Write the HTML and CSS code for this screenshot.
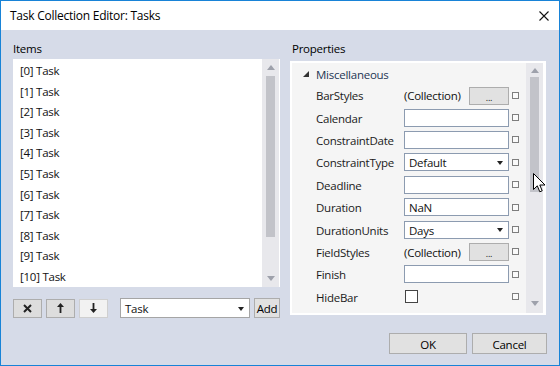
FILE: index.html
```html
<!DOCTYPE html>
<html lang="en">
<head>
  <meta charset="UTF-8" />
  <title>Task Collection Editor: Tasks</title>
  <link rel="stylesheet" href="styles.css">
</head>
<body>

  <div class="window">
    <div class="titlebar">
      <span class="title">Task Collection Editor: Tasks</span>
      <svg class="close" width="10" height="10" viewBox="0 0 10 10">
        <path d="M0.5 0.5 L9.5 9.5 M9.5 0.5 L0.5 9.5" stroke="#111" stroke-width="1.1" fill="none"/>
      </svg>
    </div>

    <div class="content">
      <div class="columns">

        <div class="col">
          <div class="caption">Items</div>
          <div class="listbox">
            <ul class="items">
              <li>[0] Task</li>
              <li>[1] Task</li>
              <li>[2] Task</li>
              <li>[3] Task</li>
              <li>[4] Task</li>
              <li>[5] Task</li>
              <li>[6] Task</li>
              <li>[7] Task</li>
              <li>[8] Task</li>
              <li>[9] Task</li>
              <li>[10] Task</li>
            </ul>
            <div class="vscroll list-scroll">
              <span class="arrow up"></span>
              <span class="thumb"></span>
              <span class="arrow down"></span>
            </div>
          </div>

          <div class="item-tools">
            <button class="tool">
              <svg width="9" height="9" viewBox="0 0 9 9"><path d="M1 1 L8 8 M8 1 L1 8" stroke="#222" stroke-width="2" fill="none"/></svg>
            </button>
            <button class="tool">
              <svg width="7" height="10" viewBox="0 0 7 10"><path d="M3.5 0 L7 4 L4.4 4 L4.4 10 L2.6 10 L2.6 4 L0 4 Z" fill="#222"/></svg>
            </button>
            <button class="tool disabled">
              <svg width="7" height="10" viewBox="0 0 7 10"><path d="M3.5 10 L7 6 L4.4 6 L4.4 0 L2.6 0 L2.6 6 L0 6 Z" fill="#222"/></svg>
            </button>
            <div class="combo type-combo">
              <span>Task</span>
              <span class="caret"></span>
            </div>
            <button class="btn add">Add</button>
          </div>
        </div>

        <div class="col">
          <div class="caption props-caption">Properties</div>
          <div class="propgrid">
            <div class="props">
              <div class="category"><span class="expander"></span>Miscellaneous</div>

              <div class="prop">
                <span class="name">BarStyles</span>
                <span class="value collection"><span>(Collection)</span><span class="dots">...</span></span>
                <span class="marker"></span>
              </div>
              <div class="prop">
                <span class="name">Calendar</span>
                <span class="value"><span class="textbox"></span></span>
                <span class="marker"></span>
              </div>
              <div class="prop">
                <span class="name">ConstraintDate</span>
                <span class="value"><span class="textbox"></span></span>
                <span class="marker"></span>
              </div>
              <div class="prop">
                <span class="name">ConstraintType</span>
                <span class="value"><span class="combo"><span>Default</span><span class="caret"></span></span></span>
                <span class="marker"></span>
              </div>
              <div class="prop">
                <span class="name">Deadline</span>
                <span class="value"><span class="textbox"></span></span>
                <span class="marker"></span>
              </div>
              <div class="prop">
                <span class="name">Duration</span>
                <span class="value"><span class="textbox">NaN</span></span>
                <span class="marker"></span>
              </div>
              <div class="prop">
                <span class="name">DurationUnits</span>
                <span class="value"><span class="combo"><span>Days</span><span class="caret"></span></span></span>
                <span class="marker"></span>
              </div>
              <div class="prop">
                <span class="name">FieldStyles</span>
                <span class="value collection"><span>(Collection)</span><span class="dots">...</span></span>
                <span class="marker"></span>
              </div>
              <div class="prop">
                <span class="name">Finish</span>
                <span class="value"><span class="textbox"></span></span>
                <span class="marker"></span>
              </div>
              <div class="prop">
                <span class="name">HideBar</span>
                <span class="value"><span class="checkbox"></span></span>
                <span class="marker"></span>
              </div>
            </div>
            <div class="vscroll grid-scroll">
              <span class="arrow up"></span>
              <span class="thumb"></span>
              <span class="arrow down"></span>
            </div>
          </div>
        </div>

      </div>

      <div class="footer">
        <button class="btn ok">OK</button>
        <button class="btn cancel">Cancel</button>
      </div>
    </div>

    <svg class="cursor" width="13" height="20" viewBox="0 0 13 20">
      <path d="M0.5 0.5 L0.5 16.5 L4.3 12.8 L6.8 18.8 L9.2 17.8 L6.8 12 L12 12 Z" fill="#fff" stroke="#000" stroke-width="1"/>
    </svg>
  </div>

</body>
</html>
```

FILE: styles.css
```css
* {
  box-sizing: border-box;
}

body {
  margin: 0;
  font-family: "Open Sans", "Noto Sans", sans-serif;
  font-size: 11.5px;
  letter-spacing: -0.25px;
  color: #111;
}

.window {
  position: relative;
  width: 560px;
  height: 366px;
  border: 1px solid #1883d7;
  background-color: #d6dbe8;
}

.titlebar {
  height: 29px;
  background-color: #fff;
  display: flex;
  align-items: center;
  padding-left: 9px;
  padding-right: 10px;
}

.title {
  font-size: 12px;
  color: #000;
}

.close {
  margin-left: auto;
}

.content {
  padding: 9px 12px 0 12px;
}

.columns {
  display: grid;
  grid-template-columns: 267px 1fr;
  column-gap: 10px;
}

.caption {
  height: 19px;
  line-height: 18px;
  padding-top: 1px;
  margin-bottom: 1px;
  color: #000;
}

.props-caption {
  padding-left: 2px;
}

/* items list */

.listbox {
  height: 228px;
  background-color: #fff;
  display: flex;
}

.items {
  flex: 1;
  list-style: none;
  margin: 0;
  padding: 2px 0 0 7px;
}

.items li {
  height: 20.6px;
  line-height: 20.6px;
}

.vscroll {
  width: 17px;
  background-color: #e8e8ec;
  display: flex;
  flex-direction: column;
  align-items: center;
}

.list-scroll {
  margin-right: 1px;
}

.arrow {
  height: 17px;
  display: flex;
  align-items: center;
  justify-content: center;
}

.arrow::before {
  content: "";
  border-left: 4.5px solid transparent;
  border-right: 4.5px solid transparent;
}

.arrow.up::before {
  border-bottom: 5px solid #9ea1ab;
}

.arrow.down::before {
  border-top: 5px solid #9ea1ab;
}

.arrow.down {
  margin-top: auto;
}

.thumb {
  width: 9px;
  background-color: #c2c3c9;
}

.list-scroll .thumb {
  height: 161px;
}

.grid-scroll .arrow.up {
  height: 14px;
}

.grid-scroll .thumb {
  height: 115px;
}

.grid-scroll .arrow.down {
  height: 20px;
}

/* buttons under the list */

.item-tools {
  display: flex;
  align-items: center;
  margin-top: 11px;
  height: 20px;
}

.tool {
  width: 29px;
  height: 19px;
  margin-right: 4px;
  padding: 0;
  border: 1px solid #adadad;
  background-color: #dddddd;
  display: flex;
  align-items: center;
  justify-content: center;
}

.tool.disabled {
  background-color: #f2f2f2;
  border-color: #cfcfcf;
}

.combo {
  display: flex;
  align-items: center;
  justify-content: space-between;
  height: 18px;
  width: 105px;
  background-color: #fff;
  border: 1px solid #8c9bb0;
  padding: 1px 5px 0 4px;
}

.caret {
  border-left: 3px solid transparent;
  border-right: 3px solid transparent;
  border-top: 4px solid #222;
}

.type-combo {
  width: 130px;
  height: 20px;
  margin-left: 8px;
  border-color: #a5a5a5;
}

.btn {
  font-family: inherit;
  font-size: 11.5px;
  letter-spacing: -0.25px;
  color: #000;
  background-color: #e1e1e1;
  border: 1px solid #adadad;
  padding: 1px 0 0 0;
}

.add {
  width: 26px;
  height: 20px;
  margin-left: 4px;
}

/* property grid */

.propgrid {
  height: 254px;
  margin-top: 3px;
  margin-right: 1px;
  background-color: #f5f5f5;
  border: 2px solid #fff;
  border-right-width: 3px;
  display: flex;
}

.props {
  flex: 1;
}

.category {
  height: 21px;
  display: flex;
  align-items: center;
  padding-left: 11px;
  padding-top: 1px;
  color: #1e3654;
}

.expander {
  width: 0;
  height: 0;
  border-left: 6px solid transparent;
  border-bottom: 6px solid #333;
  margin-right: 7px;
}

.prop {
  height: 22.4px;
  display: flex;
  align-items: center;
  padding-left: 24px;
}

.name {
  width: 88px;
  padding-top: 1px;
  white-space: nowrap;
  color: #1a1a1a;
}

.value {
  width: 105px;
  height: 18px;
  display: flex;
  align-items: center;
}

.textbox {
  width: 105px;
  height: 18px;
  line-height: 17px;
  background-color: #fff;
  border: 1px solid #8c9bb0;
  padding-left: 4px;
}

.collection {
  justify-content: space-between;
  padding-top: 1px;
}

.dots {
  width: 40px;
  height: 18px;
  background-color: #e1e1e1;
  border: 1px solid #adadad;
  font-size: 9px;
  line-height: 19px;
  text-align: center;
}

.checkbox {
  width: 13px;
  height: 13px;
  margin-left: 1px;
  background-color: #fff;
  border: 1px solid #444;
}

.marker {
  width: 7px;
  height: 7px;
  margin-left: 3px;
  border: 1px solid #7e7e7e;
  background-color: #fafafa;
}

/* dialog buttons */

.footer {
  display: flex;
  justify-content: flex-end;
  gap: 5px;
  margin-top: 15px;
}

.ok {
  width: 78px;
  height: 21px;
}

.cancel {
  width: 75px;
  height: 21px;
}

.cursor {
  position: absolute;
  left: 532px;
  top: 172px;
}
```
